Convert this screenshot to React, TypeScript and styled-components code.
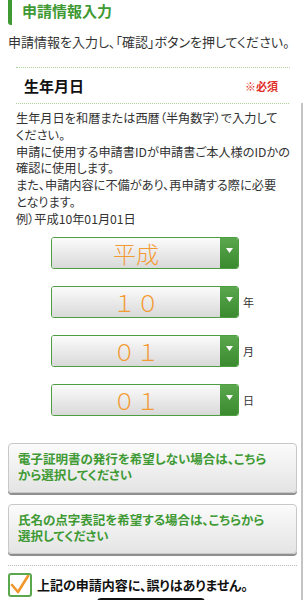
import styled, { createGlobalStyle } from 'styled-components';

const GlobalStyles = createGlobalStyle`
  body {
    margin: 0;
    background: #fff;
    font-family: "Noto Sans CJK JP", "Noto Sans", sans-serif;
    color: #333;
    font-feature-settings: "palt";
  }
`;

const GREEN = '#3f9a34';

const fields = [
  { value: '平成', unit: '' },
  { value: '１０', unit: '年' },
  { value: '０１', unit: '月' },
  { value: '０１', unit: '日' },
];

const noteLines = [
  '生年月日を和暦または西暦（半角数字）で入力して',
  'ください。',
  '申請に使用する申請書IDが申請書ご本人様のIDかの',
  '確認に使用します。',
  'また、申請内容に不備があり、再申請する際に必要',
  'となります。',
  '例）平成10年01月01日',
];

function App() {
  return (
    <Page>
      <GlobalStyles />
      <Heading>申請情報入力</Heading>
      <Intro>申請情報を入力し、「確認」ボタンを押してください。</Intro>
      <Divider />
      <FieldHead>
        <FieldTitle>生年月日</FieldTitle>
        <Required>※必須</Required>
      </FieldHead>
      <ScrollArea>
        <Divider $flush />
        <Note>
          {noteLines.map((l, i) => (
            <NoteLine key={i}>{l}</NoteLine>
          ))}
        </Note>
        <Selects>
          {fields.map((f, i) => (
            <SelectRow key={i}>
              <Select>
                <SelectValue $wide={i > 0}>{f.value}</SelectValue>
                <SelectArrow>
                  <svg width="7" height="5" viewBox="0 0 7 5">
                    <path d="M0 0 L7 0 L3.5 5 Z" fill="#fff" />
                  </svg>
                </SelectArrow>
              </Select>
              <Unit>{f.unit}</Unit>
            </SelectRow>
          ))}
        </Selects>
        <Buttons>
          <LinkButton>電子証明書の発行を希望しない場合は、こちら<br />から選択してください</LinkButton>
          <LinkButton>氏名の点字表記を希望する場合は、こちらから<br />選択してください</LinkButton>
        </Buttons>
        <GrayDivider />
        <Confirm>
          <CheckBox>
            <svg width="20" height="20" viewBox="0 0 20 20">
              <path d="M2 10 L8 17 L18 1" fill="none" stroke="#f2952b" strokeWidth="2.6" strokeLinecap="round" strokeLinejoin="round" />
            </svg>
          </CheckBox>
          <ConfirmText>上記の申請内容に、誤りはありません。</ConfirmText>
        </Confirm>
        <SubmitWrap>
          <Submit />
        </SubmitWrap>
      </ScrollArea>
    </Page>
  );
}

const Page = styled.div`
  width: 306px;
  height: 600px;
  overflow: hidden;
`;

const Heading = styled.h1`
  margin: 0 0 0 8px;
  padding: 0 0 0 10px;
  border-left: 4px solid ${GREEN};
  border-radius: 0 0 0 3px;
  height: 25px;
  line-height: 22px;
  font-size: 15px;
  font-weight: bold;
  color: ${GREEN};
`;

const Intro = styled.p`
  margin: 8px 0 0 8px;
  font-size: 13px;
  line-height: 18px;
  color: #333;
  white-space: nowrap;
`;

const Divider = styled.div<{ $flush?: boolean }>`
  margin: ${p => (p.$flush ? '0 12px 0 16px' : '16px 16px 0 16px')};
  border-top: 1px dotted #a8d49c;
`;

const FieldHead = styled.div`
  display: flex;
  align-items: center;
  justify-content: space-between;
  margin: 0 28px 0 24px;
  height: 35px;
`;

const FieldTitle = styled.div`
  font-size: 15px;
  font-weight: bold;
  color: #111;
`;

const Required = styled.div`
  font-size: 11px;
  font-weight: bold;
  color: #e0312b;
`;

const ScrollArea = styled.div`
  margin-right: 3px;
  border-right: 2px solid #c4c4c4;
`;

const Note = styled.div`
  margin: 6px 0 0 16px;
  font-size: 12.2px;
  line-height: 16.8px;
  color: #333;
`;

const NoteLine = styled.div`
  white-space: nowrap;
`;

const Selects = styled.div`
  display: flex;
  flex-direction: column;
  gap: 17px;
  margin: 9px 0 0 51px;
`;

const SelectRow = styled.div`
  display: flex;
  align-items: center;
  gap: 4px;
`;

const Select = styled.div`
  display: flex;
  width: 188px;
  height: 32px;
  box-sizing: border-box;
  border: 1px solid #4d9e41;
  border-radius: 3px;
  overflow: hidden;
`;

const SelectValue = styled.div<{ $wide: boolean }>`
  flex: 1;
  display: flex;
  align-items: center;
  justify-content: center;
  background: linear-gradient(#fbfbfb, #d9d9d9);
  color: #f39a33;
  font-size: 23px;
  font-weight: 300;
  letter-spacing: ${p => (p.$wide ? '6px' : '0')};
  padding-left: ${p => (p.$wide ? '6px' : '0')};
`;

const SelectArrow = styled.div`
  width: 18px;
  display: flex;
  align-items: center;
  justify-content: center;
  padding-bottom: 4px;
  box-sizing: border-box;
  background: linear-gradient(#5aa74d, #3b8a30);
`;

const Unit = styled.span`
  font-size: 11px;
  color: #333;
`;

const Buttons = styled.div`
  display: flex;
  flex-direction: column;
  gap: 11px;
  margin: 27px 0 0 8px;
`;

const LinkButton = styled.div`
  width: 289px;
  box-sizing: border-box;
  padding: 7px 9px 8px;
  border: 1px solid #c8c8c8;
  border-radius: 4px;
  background: linear-gradient(#fbfbfb, #e4e4e4);
  box-shadow: 0 2px 0 #8f8f8f;
  font-size: 12.5px;
  line-height: 16.5px;
  font-weight: bold;
  color: #3f9a34;
  white-space: nowrap;
`;

const GrayDivider = styled.div`
  margin: 11px 4px 0 8px;
  border-top: 1px dotted #bbb;
`;

const Confirm = styled.div`
  display: flex;
  align-items: center;
  gap: 5px;
  margin: 7px 0 0 8px;
`;

const CheckBox = styled.div`
  width: 24px;
  height: 24px;
  box-sizing: border-box;
  border: 2px solid #5aa74d;
  border-radius: 3px;
  display: flex;
  align-items: center;
  justify-content: center;
  background: #fff;
`;

const ConfirmText = styled.div`
  font-size: 13px;
  font-weight: bold;
  color: #111;
`;

const SubmitWrap = styled.div`
  display: flex;
  justify-content: center;
  padding-top: 1px;
`;

const Submit = styled.div`
  width: 108px;
  height: 20px;
  background: #111;
  border-radius: 4px;
`;

export default App;
